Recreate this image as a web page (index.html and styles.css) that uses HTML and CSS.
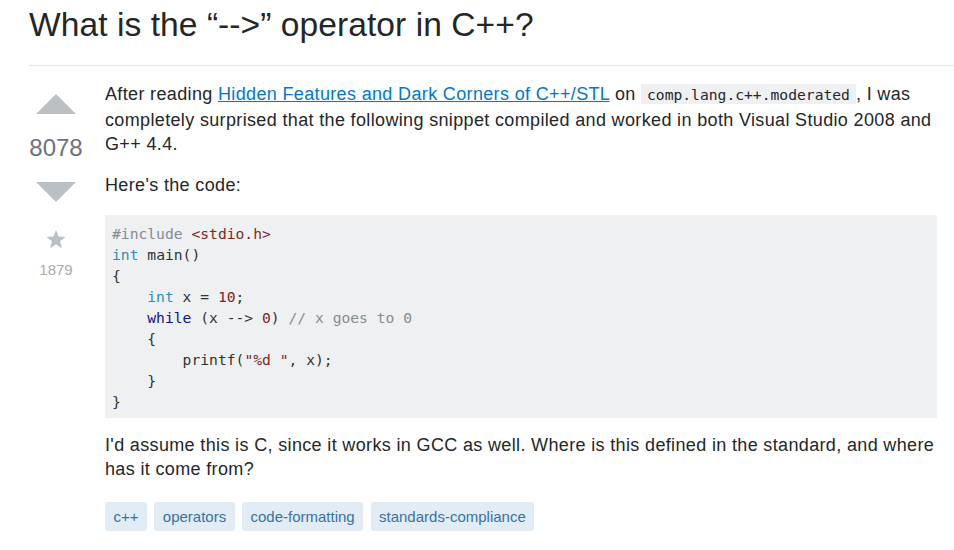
FILE: index.html
```html
<!DOCTYPE html>
<html>
<head>
<meta charset="utf-8">
<link rel="stylesheet" href="styles.css">
</head>
<body>
<div class="page">
  <div class="question-header">
    <h1 class="question-title">What is the “--&gt;” operator in C++?</h1>
  </div>
  <div class="post-layout">
    <div class="votecell">
      <svg class="vote-up" width="40" height="20" viewBox="0 0 40 20"><polygon points="0,20 40,20 20,0"/></svg>
      <div class="vote-count">8078</div>
      <svg class="vote-down" width="40" height="20" viewBox="0 0 40 20"><polygon points="0,0 40,0 20,20"/></svg>
      <svg class="fav-star" width="20" height="19" viewBox="0 0 20 19"><polygon points="10,0 12.6,6.6 19.5,6.9 14.1,11.3 15.9,18.2 10,14.3 4.1,18.2 5.9,11.3 0.5,6.9 7.4,6.6"/></svg>
      <div class="fav-count">1879</div>
    </div>
    <div class="postcell">
      <p class="post-text">After reading <a href="#" class="link">Hidden Features and Dark Corners of C++/STL</a> on <code class="inline-code">comp.lang.c++.moderated</code>, I was completely surprised that the following snippet compiled and worked in both Visual Studio 2008 and G++ 4.4.</p>
      <p class="post-text">Here's the code:</p>
      <pre class="code-block"><code><span class="com">#include</span> <span class="str">&lt;stdio.h&gt;</span>
<span class="typ">int</span> <span class="pln">main()</span>
<span class="pln">{</span>
    <span class="typ">int</span> <span class="pln">x =</span> <span class="lit">10</span><span class="pln">;</span>
    <span class="kwd">while</span> <span class="pln">(x --&gt;</span> <span class="lit">0</span><span class="pln">)</span> <span class="com">// x goes to 0</span>
    <span class="pln">{</span>
        <span class="pln">printf(</span><span class="str">"%d "</span><span class="pln">, x);</span>
    <span class="pln">}</span>
<span class="pln">}</span></code></pre>
      <p class="post-text">I'd assume this is C, since it works in GCC as well. Where is this defined in the standard, and where has it come from?</p>
      <div class="taglist">
        <a href="#" class="post-tag">c++</a>
        <a href="#" class="post-tag">operators</a>
        <a href="#" class="post-tag">code-formatting</a>
        <a href="#" class="post-tag">standards-compliance</a>
      </div>
    </div>
  </div>
</div>
</body>
</html>
```
FILE: styles.css
```css
html, body {
  margin: 0;
  padding: 0;
  background: #ffffff;
}

body {
  font-family: "Liberation Sans", Arial, sans-serif;
  color: #242729;
}

.page {
  padding: 2px 0 0 29px;
}

.question-header {
  border-bottom: 1px solid #e4e6e8;
  padding-bottom: 18px;
}

.question-title {
  margin: 0;
  font-size: 33.6px;
  line-height: 1.35;
  font-weight: normal;
  color: #242729;
  letter-spacing: 0.05px;
}

.post-layout {
  display: flex;
  gap: 22px;
  padding-top: 16px;
  padding-right: 17px;
}

.votecell {
  width: 54px;
  flex: none;
  display: flex;
  flex-direction: column;
  align-items: center;
}

.vote-up {
  margin-top: 12px;
  fill: #bbc0c4;
  display: block;
}

.vote-down {
  fill: #bbc0c4;
  display: block;
}

.vote-count {
  font-size: 24px;
  line-height: 68px;
  color: #6a737c;
}

.fav-star {
  display: block;
  margin-top: 28px;
  fill: #bbc0c4;
}

.fav-count {
  font-size: 15px;
  line-height: 20px;
  margin-top: 11px;
  color: #a6abb0;
}

.postcell {
  flex: 1;
  min-width: 0;
}

.post-text {
  margin: 0 0 17px 0;
  font-size: 18px;
  line-height: 24.3px;
  letter-spacing: 0.35px;
}

.link {
  color: #0077cc;
  text-decoration: underline;
}

.inline-code {
  font-family: "DejaVu Sans Mono", "Liberation Mono", monospace;
  font-size: 14.67px;
  letter-spacing: 0;
  background: #eff0f1;
  padding: 2px 6px 1px;
  color: #242729;
}

.code-block {
  margin: 0 0 15px 0;
  padding: 8px 7px 6px;
  background: #eff0f1;
  font-family: "DejaVu Sans Mono", "Liberation Mono", monospace;
  font-size: 14.67px;
  line-height: 21px;
  color: #303336;
  overflow: hidden;
}

.code-block code {
  font-family: inherit;
}

.com { color: #858c93; }
.str { color: #7d2727; }
.lit { color: #7d2727; }
.typ { color: #2b91af; }
.kwd { color: #101094; }
.pln { color: #303336; }

.taglist {
  display: flex;
  gap: 7.3px;
  margin-top: 21px;
}

.post-tag {
  display: inline-block;
  background: #e1ecf4;
  color: #39739d;
  font-size: 15px;
  line-height: 29px;
  padding: 0 8.5px;
  border-radius: 3px;
  text-decoration: none;
}
```
